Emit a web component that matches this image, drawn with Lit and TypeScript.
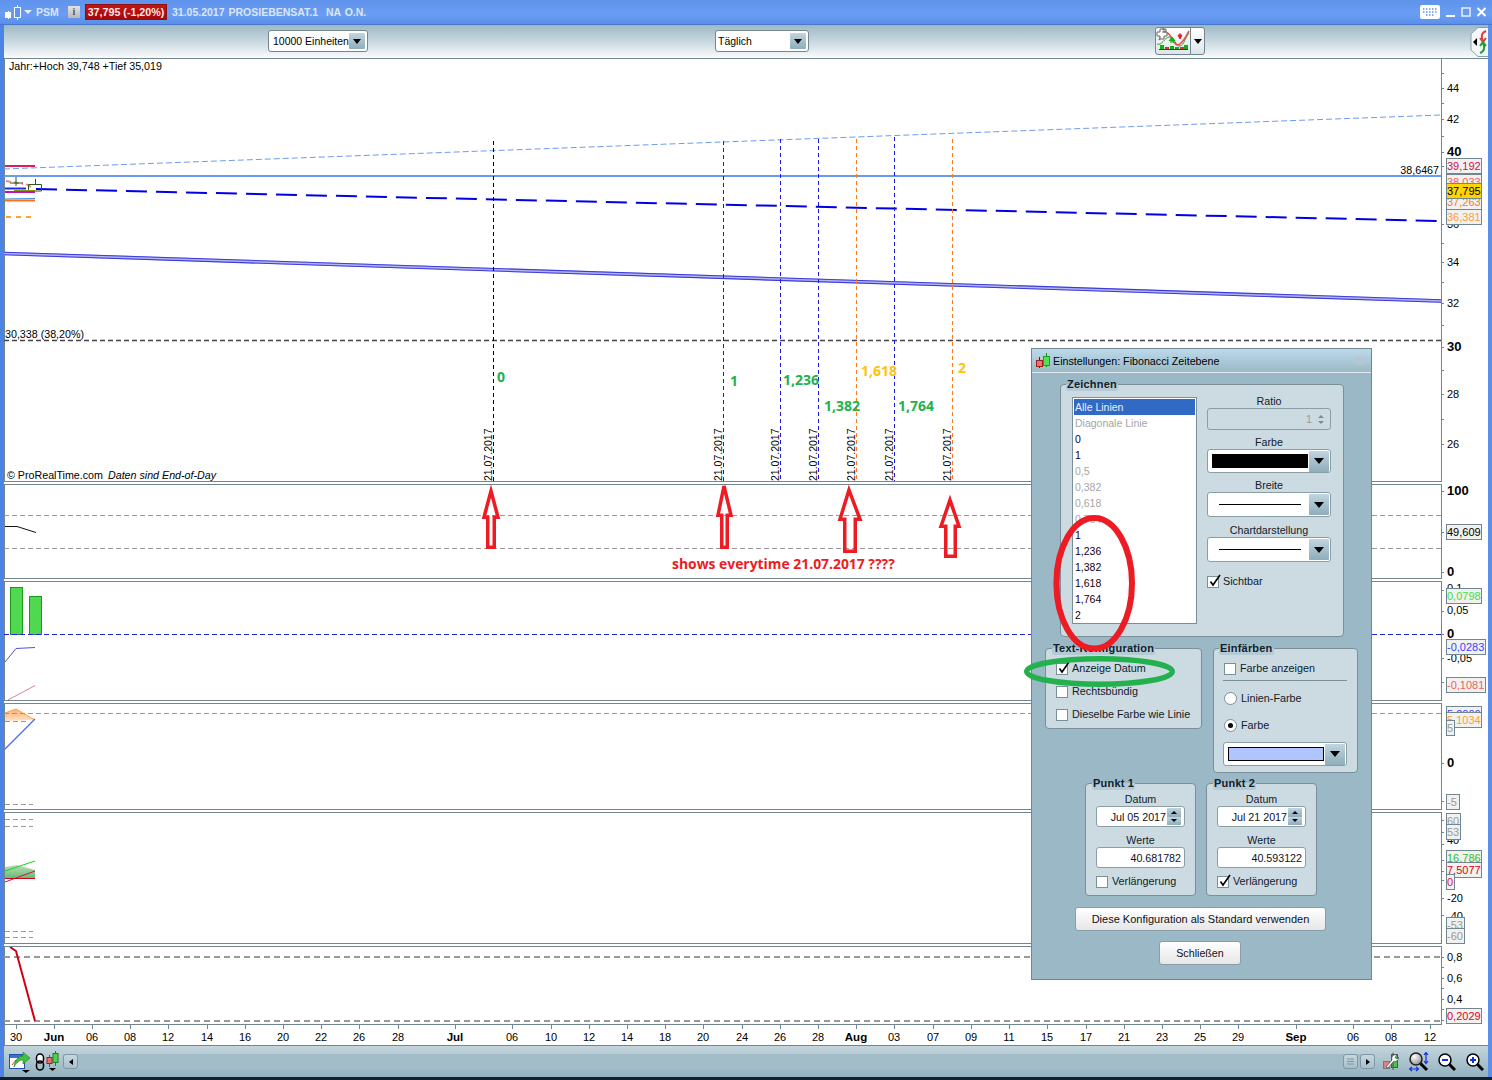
import { LitElement, html, css, svg } from "lit";
import { customElement } from "lit/decorators.js";

const LEFT = 4;
const RIGHT = 1441;
const W = RIGHT - LEFT;

type Tag = { t: string; c: string; y: number; x?: number; w?: number; bg?: string };
type Ax = { t: string; y: number; b?: boolean };

const axisTexts: Ax[] = [
  { t: "44", y: 92 }, { t: "42", y: 123 }, { t: "40", y: 156, b: true }, { t: "36", y: 228 }, { t: "34", y: 266 },
  { t: "32", y: 307 }, { t: "30", y: 351, b: true }, { t: "28", y: 398 }, { t: "26", y: 448 },
  { t: "100", y: 495, b: true }, { t: "0", y: 576, b: true },
  { t: "0,1", y: 592 }, { t: "0,05", y: 614 }, { t: "0", y: 638, b: true }, { t: "-0,05", y: 662 },
  { t: "0", y: 767, b: true },
  { t: "40", y: 844 }, { t: "-20", y: 902 }, { t: "-40", y: 920 },
  { t: "0,8", y: 961 }, { t: "0,6", y: 982 }, { t: "0,4", y: 1003 },
];

const axisTicks: number[] = [
  73, 88, 103, 119, 136, 152, 166, 224, 243, 262, 282, 303, 325, 347, 370, 394, 419, 444,
  491, 532, 572, 590, 611, 634, 658, 682, 763, 801, 820, 832, 844, 860, 871, 880, 898, 915,
  957, 967, 978, 988, 999, 1009, 1020,
];

const tags: Tag[] = [
  { t: "39,192", c: "#d0104f", y: 158, w: 36 },
  { t: "38,033", c: "#ff5a5a", y: 174, w: 36 },
  { t: "37,263", c: "#ff7a20", y: 194, w: 36 },
  { t: "37,795", c: "#000", y: 183, w: 36, bg: "#ffd400" },
  { t: "36,381", c: "#ffa030", y: 209, w: 36 },
  { t: "49,609", c: "#000", y: 524, w: 36 },
  { t: "0,0798", c: "#40e040", y: 588, w: 36 },
  { t: "-0,0283", c: "#4040ff", y: 639, w: 40 },
  { t: "-0,1081", c: "#f06060", y: 677, w: 40 },
  { t: "5,2006", c: "#4040ff", y: 706, w: 36 },
  { t: "5,1034", c: "#ffa030", y: 712, w: 36 },
  { t: "5", c: "#999", y: 720, w: 9 },
  { t: "-5", c: "#999", y: 794, w: 14 },
  { t: "60", c: "#999", y: 813, w: 15 },
  { t: "53", c: "#999", y: 824, w: 15 },
  { t: "16,786", c: "#30c030", y: 850, w: 36 },
  { t: "7,5077", c: "#e00020", y: 862, w: 36 },
  { t: "0", c: "#e0104f", y: 874, w: 9 },
  { t: "-53", c: "#999", y: 917, w: 19 },
  { t: "-60", c: "#999", y: 928, w: 19 },
  { t: "0,2029", c: "#e00020", y: 1008, w: 36 },
];

const dates: [string, number, boolean?][] = [
  ["30", 16], ["Jun", 54, true], ["06", 92], ["08", 130], ["12", 168], ["14", 207], ["16", 245], ["20", 283],
  ["22", 321], ["26", 359], ["28", 398], ["Jul", 455, true], ["06", 512], ["10", 551], ["12", 589], ["14", 627],
  ["18", 665], ["20", 703], ["24", 742], ["26", 780], ["28", 818], ["Aug", 856, true], ["03", 894], ["07", 933],
  ["09", 971], ["11", 1009], ["15", 1047], ["17", 1086], ["21", 1124], ["23", 1162], ["25", 1200], ["29", 1238],
  ["Sep", 1296, true], ["06", 1353], ["08", 1391], ["12", 1430],
];

const fibLines: [number, number, string][] = [
  [493, 141, "#000"], [723, 141, "#1a1ae0"], [780, 139, "#1a1ae0"], [818, 139, "#1a1ae0"],
  [856, 139, "#ff7a1a"], [894, 137, "#1a1ae0"], [952, 139, "#ff7a1a"],
];

const fibLabels: [string, number, number, string][] = [
  ["0", 497, 382, "#22b14c"], ["1", 730, 386, "#22b14c"], ["1,236", 783, 385, "#22b14c"],
  ["1,382", 824, 411, "#22b14c"], ["1,618", 861, 376, "#ffc20e"], ["1,764", 898, 411, "#22b14c"],
  ["2", 958, 373, "#ffc20e"],
];

// outer silhouettes: tip x, tip y, head left, head right, base y, shaft left, shaft right, bottom
const arrows: [number, number, number, number, number, number, number, number][] = [
  [491, 488, 482, 500, 519, 486, 496, 549],
  [724, 483, 716, 733, 517, 720, 729, 549],
  [849, 487, 838, 862, 521, 843, 857, 553],
  [950, 497, 939, 961, 528, 944, 957, 558],
];

const listItems: [string, boolean][] = [
  ["Diagonale Linie", true], ["0", false], ["1", false], ["0,5", true], ["0,382", true], ["0,618", true],
  ["0,764", true], ["1", false], ["1,236", false], ["1,382", false], ["1,618", false], ["1,764", false], ["2", false],
];

const check = svg`<svg class="tick" viewBox="0 0 14 14" width="14" height="14"><path d="M2.5 7.5 L5 11 L12 1" fill="none" stroke="#000" stroke-width="1.6"/></svg>`;
const caret = html`<span class="caret"></span>`;

@customElement("app-root")
export class AppRoot extends LitElement {
  static styles = css`
    :host { display: block; width: 1492px; height: 1080px; position: relative; overflow: hidden; background: #fff;
      font: 10.7px "Liberation Sans", Arial, sans-serif; color: #000; }
    * { box-sizing: border-box; }
    .win { width: 1492px; height: 1080px; display: flex; flex-direction: column; background: linear-gradient(90deg, #4c84e6, #6a9df2 40%, #5b8fea); }
    .titlebar { height: 25px; flex: none; display: flex; align-items: center; padding-left: 4px; color: #dbe6fa; font-weight: bold; font-size: 10.5px;
      background: linear-gradient(#5f93ec, #6a9df2 60%, #5a8eea); border-bottom: 1px solid #4878cc; }
    .tcaret { margin-left: 3px; }
    .psm { margin-left: 4px; width: 32px; }
    .info { width: 12px; height: 12px; background: linear-gradient(#e4e4e4, #b8b8b8); color: #556; font: bold 10px "Liberation Serif", serif; text-align: center; line-height: 12px; }
    .quote { margin-left: 5px; height: 16px; width: 82px; background: linear-gradient(#c61515, #a30808); color: #ffe8e8; border: 1px solid #8a1010; line-height: 14px; text-align: center; white-space: nowrap; font-size: 10.7px; }
    .ttl { margin-left: 5px; white-space: pre; word-spacing: 1px; }
    .winbtns { margin-left: auto; margin-right: 6px; display: flex; align-items: center; gap: 6px; }
    .content { flex: 1; margin: 0 4px; display: flex; flex-direction: column; background: #fff; min-height: 0; }
    .toolbar { height: 33px; flex: none; display: flex; align-items: flex-start; background: linear-gradient(#9db8c4, #d2dfe5 60%, #fbfcfd); }
    .sel { height: 22px; margin-top: 5px; background: #fff; border: 1px solid #71868f; border-radius: 3px; display: flex; align-items: center; padding: 0 2px 0 3px; }
    .sel .lab { flex: 1; white-space: nowrap; overflow: hidden; padding-bottom: 1px; font-size: 10.5px; }
    .dbtn { width: 16px; height: 16px; background: linear-gradient(#c0d5df, #8fadbb); display: flex; align-items: center; justify-content: center; border-radius: 1px; flex: none; }
    .caret { width: 0; height: 0; border: 4px solid transparent; border-top: 5px solid #000; border-bottom: 0; display: block; }
    .s1 { width: 100px; margin-left: 264px; padding-left: 4px; }
    .s2 { width: 94px; margin-left: 347px; padding-left: 2px; }
    .tool { width: 50px; height: 28px; margin: 2px 0 0 346px; display: flex; border: 1px solid #71868f; border-radius: 3px; background: linear-gradient(#fff, #dde5e9); }
    .tool .ic { width: 35px; border-right: 1px solid #71868f; }
    .tool .d { flex: 1; display: flex; align-items: center; justify-content: center; }
    .tab { margin: 2px 0 0 auto; width: 18px; height: 30px; }
    .rows { height: 987px; flex: none; display: flex; flex-direction: column; border-top: 1px solid #71868f; box-shadow: inset 1px 0 0 #71868f; }
    .panel { flex: none; width: ${W + 1}px; border-right: 1px solid #71868f; border-bottom: 1px solid #71868f; display: block; }
    .panel svg { display: block; width: 100%; height: 100%; }
    .gap { flex: none; height: 3px; width: ${W + 1}px; border-bottom: 1px solid #71868f; background: #fff; }
    .p1 { height: 423px; } .p2 { height: 94px; } .p3 { height: 119px; } .p4 { height: 106px; } .p5 { height: 131px; } .p6 { height: 78px; }
    .dates { flex: none; height: 20px; width: ${W + 1}px; }
    .dates svg { display: block; }
    .bottom { flex: none; height: 32px; display: flex; align-items: center;
      background: linear-gradient(#c3d5dd, #93b1bf); border-top: 1px solid #71868f; }
    .track { height: 15px; width: 1312px; margin-left: 4px; background: #a2bcc8; display: flex; justify-content: space-between; }
    .sbtn { width: 15px; height: 15px; border: 1px solid #7d97a3; border-radius: 3px; background: linear-gradient(#c6d7df, #a8c0cb); display: flex; align-items: center; justify-content: center; flex: none; }
    .sbtn i { width: 0; height: 0; border: 3.5px solid transparent; display: block; }
    .sbtn .l { border-right: 4px solid #000; border-left: 0; }
    .sbtn .r { border-left: 4px solid #000; border-right: 0; }
    .trk-r { display: flex; gap: 2px; }
    .foot { height: 3px; background: #10202c; flex: none; }
    .m5 { margin-left: 5px; } .m4 { margin-left: 4px; } .m1 { margin-left: 1px; } .m8 { margin-left: 8px; } .m10 { margin-left: 10px; }

    .axis { position: absolute; left: 0; top: 0; width: 1492px; height: 1080px; pointer-events: none; }
    .tag { position: absolute; left: 1446px; height: 16px; background: #f1f1ef; border: 1px solid #71868f; font-size: 11px; line-height: 14px; padding: 0; white-space: nowrap; overflow: hidden; }

    .dlg { position: absolute; left: 1031px; top: 348px; width: 341px; height: 632px; background: #9ab8c6; border: 1px solid #71868f; display: flex; flex-direction: column; }
    .dt { height: 24px; flex: none; display: flex; align-items: center; padding: 0 6px 0 3px; background: linear-gradient(#bcdaea, #9ab8c6); border-bottom: 1px solid #e2ecf0; gap: 2px; }
    .dt .x { margin-left: auto; }
    .group { position: relative; background: #ccdbe2; border: 1px solid #7a8f98; border-radius: 4px; flex: none; }
    .lg { position: absolute; top: -7px; left: 6px; padding: 0 1px; height: 13px; line-height: 13px; font-weight: bold; font-size: 11px; background: linear-gradient(#9ab8c6 50%, #b4cbd6 50%); border-radius: 2px; color: #10202a; white-space: nowrap; letter-spacing: .2px; }
    .zeich .lg, .einf .lg { left: 5px; }
    .zeich { margin: 11px 0 0 28px; width: 284px; height: 253px; display: flex; padding: 12px 12px 0 11px; gap: 10px; }
    .list { width: 125px; height: 227px; background: #fff; border: 1px solid #7a8f98; padding: 1px; flex: none; font-size: 10.5px; }
    .li { height: 16px; line-height: 16px; padding-left: 1px; white-space: nowrap; color: #180018; }
    .li.dis { color: #a5a5a5; }
    .li.sel2 { background: #316ac5; color: #e8eef8; }
    .side { flex: 1; display: flex; flex-direction: column; align-items: stretch; margin-top: -3px; }
    .cap { text-align: center; height: 14px; line-height: 14px; color: #10202a; }
    .spin { height: 22px; background: #ccdbe2; border: 1px solid #8a9ea7; border-radius: 3px; display: flex; align-items: center; justify-content: flex-end; color: #999; padding-right: 6px; gap: 6px; margin-bottom: 5px; }
    .arr2 { display: flex; flex-direction: column; gap: 3px; }
    .arr2 i { width: 0; height: 0; border: 3px solid transparent; display: block; }
    .arr2 .u { border-bottom: 3px solid #888; border-top: 0; }
    .arr2 .dn { border-top: 3px solid #888; border-bottom: 0; }
    .dsel { height: 25px; background: #fff; border: 1px solid #8a9ea7; border-radius: 3px; display: flex; align-items: center; padding: 0 1px 0 4px; margin-bottom: 5px; }
    .dsel.h24 { height: 24px; }
    .dsel.mb6 { margin-bottom: 6px; }
    .dbtn.big { width: 20px; height: 21px; }
    .dbtn.big .caret { border-width: 5px; border-top-width: 6px; border-bottom: 0; }
    .dsel .fill { flex: 1; }
    .sw { height: 14px; background: #000; margin-right: 1px; }
    .ln { height: 1px; background: #000; margin: 0 8px 0 7px; }
    .sw2 { height: 14px; background: #b0c4ff; border: 1px solid #000; margin-right: 1px; }
    .ck { display: flex; align-items: flex-start; gap: 4px; height: 13px; line-height: 13px; white-space: nowrap; color: #10202a; font-size: 10.8px; }
    .box { width: 12px; height: 12px; margin-top: 1px; background: #fff; border: 1px solid #7a8f98; flex: none; position: relative; }
    .box .tick { position: absolute; left: 0; top: -3px; overflow: visible; }
    .radio { width: 13px; height: 13px; border-radius: 50%; background: #fff; border: 1px solid #7a8f98; flex: none; display: flex; align-items: center; justify-content: center; }
    .radio b { width: 5px; height: 5px; border-radius: 50%; background: #000; display: block; }
    .row2 { display: flex; margin: 11px 0 0 13px; gap: 11px; align-items: flex-start; }
    .txtc { width: 157px; height: 81px; padding: 13px 0 0 10px; display: flex; flex-direction: column; gap: 10px; }
    .einf { width: 145px; height: 125px; padding: 13px 10px 0 10px; display: flex; flex-direction: column; }
    .hr { height: 1px; background: #7a8f98; margin: 5px 0 11px -1px; }
    .mt14 { margin-top: 14px; }
    .einf .dsel { height: 24px; margin: 10px 0 0 -1px; }
    .row3 { display: flex; margin: 10px 0 0 53px; gap: 10px; }
    .pt { width: 111px; height: 113px; padding: 8px 10px 0 10px; display: flex; flex-direction: column; }
    .fld { height: 21px; width: 89px; background: #fff; border: 1px solid #8a9ea7; border-radius: 3px; display: flex; align-items: center; justify-content: flex-end; padding-right: 3px; flex: none; color: #10101a; }
    .fld .sp { width: 14px; height: 17px; display: flex; flex-direction: column; margin-left: 1px; }
    .fld .sp span { flex: 1; background: linear-gradient(#c0d5df, #8fadbb); display: flex; align-items: center; justify-content: center; }
    .fld .sp i { width: 0; height: 0; border: 3px solid transparent; display: block; }
    .fld .sp .u { border-bottom: 3px solid #000; border-top: 0; }
    .fld .sp .dn { border-top: 3px solid #000; border-bottom: 0; }
    .cap2 { text-align: center; height: 14px; line-height: 14px; color: #10202a; width: 89px; }
    .cap2.w { margin-top: 6px; }
    .ptck { margin-top: 7px; }
    .sicht { margin-top: 8px; }
    .btn { height: 24px; border: 1px solid #8a9ea7; border-radius: 3px; background: linear-gradient(#fff, #e6e6e6); text-align: center; line-height: 22px; color: #10101a; flex: none; }
    .b1 { width: 251px; margin: 11px 0 0 43px; font-size: 11px; }
    .b2 { width: 82px; margin: 10px 0 0 127px; }
    .over { position: absolute; left: 0; top: 0; width: 1492px; height: 1080px; pointer-events: none; }
    text { font-family: "Liberation Sans", Arial, sans-serif; font-size: 10.7px; }
    .ot { font: bold 14px "Open Sans", sans-serif; }
    .note { font: bold 13.9px "Open Sans", sans-serif; }
    .rot { font-size: 10.5px; }
    .ax { font-size: 11px; }
    .axb { font-size: 13px; font-weight: bold; }
    .dt1 { font-size: 11px; }
    .dtb { font-size: 11.5px; font-weight: bold; }
  `;

  private panel(cls: string, y0: number, h: number, body: unknown) {
    return html`<div class="panel ${cls}"><svg viewBox="${LEFT} ${y0} ${W} ${h}" width="${W}" height="${h}" preserveAspectRatio="none">${body}</svg></div>`;
  }

  private price() {
    return svg`
      <text x="9" y="70">Jahr:+Hoch 39,748 +Tief 35,019</text>
      <line x1="4" y1="169" x2="1441" y2="115" stroke="#6d9cf0" stroke-width="1" stroke-dasharray="6 3"/>
      <line x1="4" y1="176" x2="1441" y2="176" stroke="#6b9bf0" stroke-width="2"/>
      <text x="1439" y="174" text-anchor="end">38,6467</text>
      <line x1="36" y1="189" x2="1441" y2="221" stroke="#0000e6" stroke-width="2" stroke-dasharray="21 9"/>
      <line x1="4" y1="253.5" x2="1441" y2="301" stroke="#b4b4f2" stroke-width="3.5"/>
      <line x1="4" y1="252.2" x2="1441" y2="299.7" stroke="#3c3cd8" stroke-width="1.1"/>
      <line x1="4" y1="254.8" x2="1441" y2="302.3" stroke="#3c3cd8" stroke-width="1.1"/>
      <line x1="4" y1="340.5" x2="1441" y2="340.5" stroke="#444" stroke-width="1.4" stroke-dasharray="5 3"/>
      <text x="5" y="338">30,338 (38,20%)</text>
      <line x1="5" y1="166" x2="35" y2="166" stroke="#d8205a" stroke-width="2"/>
      <line x1="6" y1="181" x2="23" y2="184" stroke="#f08090" stroke-width="2" stroke-dasharray="5 3"/>
      <line x1="26" y1="184" x2="31" y2="187" stroke="#f08090" stroke-width="2"/>
      <path d="M10 183H23M16 177V186" stroke="#2a5a1a" fill="none"/>
      <path d="M35.500 179V184.500M28.500 191V184.500H41.500V191H28.500" stroke="#2a5a1a" fill="none"/>
      <line x1="5" y1="188.500" x2="26" y2="188.500" stroke="#2030e0" stroke-width="2"/>
      <line x1="5" y1="192" x2="35" y2="192" stroke="#c010c0" stroke-width="2"/>
      <line x1="14" y1="190.500" x2="35" y2="190.500" stroke="#8a9a10" stroke-width="1"/>
      <line x1="5" y1="199" x2="35" y2="198.500" stroke="#3a8ae0" stroke-width="1"/>
      <line x1="5" y1="200.500" x2="35" y2="200.500" stroke="#ff7010" stroke-width="2"/>
      <line x1="6" y1="217" x2="33" y2="217" stroke="#ffa030" stroke-width="2" stroke-dasharray="5 5"/>
      ${fibLines.map(([x, y, c]) => svg`<line x1="${x + 0.5}" y1="${y}" x2="${x + 0.5}" y2="481" stroke="${c}" stroke-dasharray="4 3"/>`)}
      ${fibLabels.map(([t, x, y, c]) => svg`<text class="ot" x="${x}" y="${y}" fill="${c}">${t}</text>`)}
      ${fibLines.map(([x]) => svg`<text class="rot" transform="translate(${x - 1} 481) rotate(-90)">21.07.2017</text>`)}
      <text x="7" y="479">© ProRealTime.com<tspan dx="5" font-style="italic">Daten sind End-of-Day</tspan></text>`;
  }

  private osc() {
    return svg`
      <line x1="4" y1="515.500" x2="1441" y2="515.500" stroke="#999" stroke-dasharray="5 3"/>
      <line x1="4" y1="548.500" x2="1441" y2="548.500" stroke="#999" stroke-dasharray="5 3"/>
      <path d="M5 526.500H17L36 532.500" stroke="#111" fill="none"/>`;
  }

  private macd() {
    return svg`
      <rect x="10.500" y="587.500" width="12" height="47" fill="#50d850" stroke="#1a9a1a"/>
      <rect x="29.500" y="596.500" width="12" height="38" fill="#50d850" stroke="#1a9a1a"/>
      <line x1="4" y1="634.500" x2="1441" y2="634.500" stroke="#2020e0" stroke-dasharray="5 3"/>
      <path d="M5 662L16 648.500L35 647.500" stroke="#5050e0" fill="none"/>
      <line x1="8" y1="700" x2="35" y2="685.500" stroke="#e08090"/>`;
  }

  private p4() {
    return svg`
      <defs><linearGradient id="og" x1="0" y1="0" x2="0" y2="1"><stop offset="0" stop-color="#ffb070"/><stop offset="1" stop-color="#ffe0c8"/></linearGradient></defs>
      <polygon points="5,713 16,709 35,720 5,721" fill="url(#og)"/>
      <path d="M5 713L16 709L35 720" stroke="#ffa040" fill="none"/>
      <line x1="4" y1="713.500" x2="1441" y2="713.500" stroke="#999" stroke-dasharray="5 3"/>
      <line x1="5" y1="721.500" x2="28" y2="721.500" stroke="#999" stroke-dasharray="5 3"/>
      <line x1="5" y1="749" x2="35" y2="719" stroke="#4a6cf5" stroke-width="1.2"/>
      <line x1="5" y1="804.500" x2="33" y2="804.500" stroke="#999" stroke-dasharray="5 3"/>`;
  }

  private p5() {
    return svg`
      <defs><linearGradient id="gg" x1="0" y1="0" x2="0" y2="1"><stop offset="0" stop-color="#c0d8c0"/><stop offset="1" stop-color="#60c070"/></linearGradient></defs>
      <polygon points="5,867 17,865 35,870 35,878 5,878" fill="url(#gg)"/>
      <line x1="5" y1="871" x2="35" y2="861" stroke="#20d020"/>
      <line x1="5" y1="882" x2="35" y2="871" stroke="#e01030"/>
      <line x1="5" y1="878.500" x2="35" y2="878.500" stroke="#d00020"/>
      ${[819.5, 826.5, 931.5, 937.5].map((y) => svg`<line x1="5" y1="${y}" x2="33" y2="${y}" stroke="#999" stroke-dasharray="5 3"/>`)}`;
  }

  private p6() {
    return svg`
      <line x1="4" y1="957" x2="1441" y2="957" stroke="#999" stroke-width="2" stroke-dasharray="6 4"/>
      <line x1="4" y1="1021" x2="1441" y2="1021" stroke="#999" stroke-width="2" stroke-dasharray="6 4"/>
      <path d="M10 947L16 951L35 1021" stroke="#d00010" stroke-width="2" fill="none"/>`;
  }

  private datesRow() {
    return html`<div class="dates"><svg viewBox="${LEFT} 1025 ${W + 1} 20" width="${W + 1}" height="20">
      ${dates.map(([t, x, b]) => svg`
        <line x1="${x + 0.5}" y1="1025" x2="${x + 0.5}" y2="1029" stroke="#71868f"/>
        <text class="${b ? "dtb" : "dt1"}" x="${x}" y="1041" text-anchor="middle">${t}</text>`)}
    </svg></div>`;
  }

  private axis() {
    return html`<svg class="axis" viewBox="0 0 1492 1080">
      ${axisTicks.map((y) => svg`<line x1="1441" y1="${y + 0.5}" x2="1444" y2="${y + 0.5}" stroke="#71868f"/>`)}
      ${axisTexts.map((a) => svg`<text class="${a.b ? "axb" : "ax"}" x="1447" y="${a.y}">${a.t}</text>`)}
    </svg>
    ${tags.map((g) => html`<div class="tag" style="top:${g.y}px;width:${g.w ?? 36}px;color:${g.c};${g.bg ? `background:${g.bg}` : ""}">${g.t}</div>`)}`;
  }

  private overlay() {
    const s = 1.75;
    return html`<svg class="over" viewBox="0 0 1492 1080">
      ${arrows.map(([tx, ty, hl, hr, by, sl, sr, bot]) => svg`<polygon points="${tx},${ty + 3} ${hr - 2},${by - s} ${sr - s},${by - s} ${sr - s},${bot - s} ${sl + s},${bot - s} ${sl + s},${by - s} ${hl + 2},${by - s}" fill="none" stroke="#ed1c24" stroke-width="3.5"/>`)}
      <text class="note" x="672" y="569" fill="#ed1c24">shows everytime 21.07.2017 ????</text>
      <ellipse cx="1094.200" cy="583.300" rx="37.800" ry="65.300" fill="none" stroke="#ed1c24" stroke-width="6"/>
      <ellipse cx="1099.500" cy="671.500" rx="72.800" ry="12.800" fill="none" stroke="#22b14c" stroke-width="5.500"/>
    </svg>`;
  }

  private checkRow(label: string, on = false) {
    return html`<div class="ck"><span class="box">${on ? check : ""}</span>${label}</div>`;
  }

  private drop(inner: unknown, cls = "") {
    return html`<div class="dsel ${cls}">${inner}<span class="dbtn big">${caret}</span></div>`;
  }

  private punkt(name: string, d: string, v: string, on: boolean) {
    return html`<div class="group pt"><div class="lg">${name}</div>
      <div class="cap2">Datum</div>
      <div class="fld">${d}<span class="sp"><span><i class="u"></i></span><span><i class="dn"></i></span></span></div>
      <div class="cap2 w">Werte</div>
      <div class="fld">${v}</div>
      <div class="ptck">${this.checkRow("Verlängerung", on)}</div>
    </div>`;
  }

  private dialog() {
    return html`<div class="dlg">
      <div class="dt">
        <svg width="16" height="16" viewBox="0 0 16 16"><path d="M4.500 4V15" stroke="#900"/><rect x="1.500" y="7.500" width="6" height="6" fill="#f07070" stroke="#a02020"/><path d="M11.500 0V14" stroke="#090"/><rect x="8.500" y="3.500" width="6" height="9" fill="#50e050" stroke="#20a020"/></svg>
        <span>Einstellungen: Fibonacci Zeitebene</span>
        <svg class="x" width="10" height="10" viewBox="0 0 10 10"><path d="M1 1L9 9M9 1L1 9" stroke="#b9c5cb" stroke-width="2.600"/></svg>
      </div>
      <div class="group zeich"><div class="lg">Zeichnen</div>
        <div class="list">
          <div class="li sel2">Alle Linien</div>
          ${listItems.map(([t, d]) => html`<div class="li ${d ? "dis" : ""}">${t}</div>`)}
        </div>
        <div class="side">
          <div class="cap">Ratio</div>
          <div class="spin">1<span class="arr2"><i class="u"></i><i class="dn"></i></span></div>
          <div class="cap">Farbe</div>
          ${this.drop(html`<span class="fill sw"></span>`, "h24")}
          <div class="cap">Breite</div>
          ${this.drop(html`<span class="fill ln"></span>`, "mb6")}
          <div class="cap">Chartdarstellung</div>
          ${this.drop(html`<span class="fill ln"></span>`)}
          <div class="sicht">${this.checkRow("Sichtbar", true)}</div>
        </div>
      </div>
      <div class="row2">
        <div class="group txtc"><div class="lg">Text-Konfiguration</div>
          ${this.checkRow("Anzeige Datum", true)}
          ${this.checkRow("Rechtsbündig")}
          ${this.checkRow("Dieselbe Farbe wie Linie")}
        </div>
        <div class="group einf"><div class="lg">Einfärben</div>
          ${this.checkRow("Farbe anzeigen")}
          <div class="hr"></div>
          <div class="ck"><span class="radio"></span>Linien-Farbe</div>
          <div class="ck mt14"><span class="radio"><b></b></span>Farbe</div>
          ${this.drop(html`<span class="fill sw2"></span>`)}
        </div>
      </div>
      <div class="row3">
        ${this.punkt("Punkt 1", "Jul 05 2017", "40.681782", false)}
        ${this.punkt("Punkt 2", "Jul 21 2017", "40.593122", true)}
      </div>
      <div class="btn b1">Diese Konfiguration als Standard verwenden</div>
      <div class="btn b2">Schließen</div>
    </div>`;
  }

  render() {
    return html`<div class="win">
      <div class="titlebar">
        <svg width="17" height="17" viewBox="0 0 17 17"><path d="M4.500 7V15M13.500 1V16" stroke="#fff"/><rect x="1" y="8" width="6" height="6" fill="#fff"/><rect x="10.500" y="3.500" width="6" height="10" fill="#5f93ec" stroke="#fff"/></svg>
        <svg class="tcaret" width="8" height="6" viewBox="0 0 8 6"><path d="M0 1H8L4 5Z" fill="#e4ecfa"/></svg>
        <span class="psm">PSM</span>
        <span class="info">i</span>
        <span class="quote">37,795 (-1,20%)</span>
        <span class="ttl">31.05.2017 PROSIEBENSAT.1  NA O.N.</span>
        <span class="winbtns">
          <svg width="20" height="14" viewBox="0 0 20 14"><rect width="20" height="14" rx="2" fill="#fff"/><path d="M3 4H17M3 7H17M6 10H14" stroke="#5f93ec" stroke-dasharray="1.500 1.500" stroke-width="1.500"/></svg>
          <svg width="9" height="10" viewBox="0 0 9 10"><path d="M0 9H9" stroke="#fff" stroke-width="2"/></svg>
          <svg width="10" height="10" viewBox="0 0 10 10"><rect x="1" y="1" width="8" height="8" fill="none" stroke="#e8f0fc" stroke-width="1.500"/></svg>
          <svg width="9" height="10" viewBox="0 0 9 10"><path d="M.5 1L8.500 9M8.500 1L.5 9" stroke="#fff" stroke-width="2"/></svg>
        </span>
      </div>
      <div class="content">
        <div class="toolbar">
          <div class="sel s1"><span class="lab">10000 Einheiten</span><span class="dbtn">${caret}</span></div>
          <div class="sel s2"><span class="lab">Täglich</span><span class="dbtn">${caret}</span></div>
          <div class="tool">
            <span class="ic"><svg width="34" height="26" viewBox="0 0 34 26">
              <rect x="3" y="21" width="29" height="1" fill="#2030c0"/>
              ${[[4, 17, 4, "#10b010"], [9, 19, 2, "#d03040"], [14, 18, 3, "#10b010"], [19, 19, 2, "#10b010"], [24, 19, 2, "#d03040"], [28, 17, 4, "#10b010"]].map(([x, y, h, c]) => svg`<rect x="${x}" y="${y}" width="4" height="${h}" fill="${c}"/>`)}
              <path d="M1 16C6 18 8 10 13 9S20 19 24 18S29 10 33 5" fill="none" stroke="#30a030"/>
              <path d="M3 12C8 2 12 4 15 9S20 20 25 15S30 8 33 3" fill="none" stroke="#e05050" stroke-width="1.500"/>
              <path d="M6 4H10V1H6M6 1H4V4H1V8H4V11H8V8H11V4H8V1H6" fill="#fff" stroke="#666"/>
              <path d="M14 14H18M16 9V14M13 13L16 9L19 13" fill="#10b010" stroke="#10b010"/>
              <path d="M24 5V9M22 7L24 11L26 7Z" fill="#e02020" stroke="#e02020"/>
            </svg></span>
            <span class="d">${caret}</span>
          </div>
          <span class="tab"><svg width="18" height="30" viewBox="0 0 18 30">
            <path d="M18 .5H8L1 7V23L8 29.500H18" fill="#f5f8f9" stroke="#8aa0aa"/>
            <path d="M7 11L3 15L7 19Z" fill="#000"/>
            <path d="M16 4C11 6 11 10 13 14M10 11L13 15L16 11" fill="none" stroke="#e04040" stroke-width="2"/>
            <path d="M10 26C15 24 15 20 13 16M10 19L13 15L16 19" fill="none" stroke="#20a030" stroke-width="2"/>
          </svg></span>
        </div>
        <div class="rows">
          ${this.panel("p1", 59, 422, this.price())}
          <div class="gap"></div>
          ${this.panel("p2", 485, 93, this.osc())}
          <div class="gap"></div>
          ${this.panel("p3", 582, 118, this.macd())}
          <div class="gap"></div>
          ${this.panel("p4", 704, 105, this.p4())}
          <div class="gap"></div>
          ${this.panel("p5", 813, 130, this.p5())}
          <div class="gap"></div>
          ${this.panel("p6", 947, 77, this.p6())}
          ${this.datesRow()}
        </div>
        <div class="bottom">
          <svg class="m5" width="22" height="24" viewBox="0 0 22 24"><rect x=".5" y="4.500" width="15" height="14" fill="#fff" stroke="#2050b0"/><rect x="1" y="5" width="14" height="3" fill="#3a70d0"/><path d="M3 15L7 10L9 13" fill="none" stroke="#e04040"/><path d="M5 17C6 9 10 6 14 6V2L21 8L14 14V10C10 10 8 12 5 17Z" fill="#40c040" stroke="#208020" stroke-width=".6"/><path d="M13 20H21L17 23Z" fill="#000"/></svg>
          <svg class="m4" width="10" height="18" viewBox="0 0 10 18"><rect x="1.500" y="1" width="7" height="9" rx="3.500" fill="#fff" stroke="#000" stroke-width="1.500"/><rect x="1.500" y="8" width="7" height="9" rx="3.500" fill="none" stroke="#000" stroke-width="1.500"/></svg>
          <svg class="m1" width="13" height="22" viewBox="0 0 13 22"><path d="M3.500 4V16M9.500 0V15" stroke="#208020"/><rect x="1" y="6.500" width="5" height="6" fill="#f07070" stroke="#a02020"/><rect x="7" y="2.500" width="5" height="9" fill="#50d050" stroke="#208020"/><path d="M3 17H10L6.500 20Z" fill="#000"/></svg>
          <div class="track">
            <span class="sbtn"><i class="l"></i></span>
            <span class="trk-r">
              <span class="sbtn"><svg width="9" height="7" viewBox="0 0 9 7"><path d="M1 1H8M1 3.500H8M1 6H8" stroke="#7d97a3"/></svg></span>
              <span class="sbtn"><i class="r"></i></span>
            </span>
          </div>
          <svg class="m8" width="16" height="19" viewBox="0 0 16 19"><rect x=".5" y="9.500" width="6" height="7" fill="#e08080" stroke="#777"/><rect x="8.500" y="2.500" width="6" height="13" fill="#50c050" stroke="#555"/><path d="M10 .5V18" stroke="#555"/><path d="M3 15L9 8C8 4 11 2 14 3L12 5.500L14 7L16 5C16 8 13 10 10.500 9.500L5 16Z" fill="#fff" stroke="#333" stroke-width=".6"/></svg>
          <svg class="m10" width="21" height="20" viewBox="0 0 21 20"><defs><radialGradient id="mg" cx=".35" cy=".3" r=".8"><stop offset="0" stop-color="#fff"/><stop offset="1" stop-color="#888"/></radialGradient></defs><circle cx="7" cy="7" r="6" fill="url(#mg)" stroke="#222" stroke-width="1.500"/><path d="M11.500 11.500L18 18" stroke="#000" stroke-width="3"/><path d="M17 1V11M15 3L17 .5L19 3M15 9L17 11.500L19 9M1 17H9M3 15L.5 17L3 19M7 15L9.500 17L7 19" fill="none" stroke="#1030e0" stroke-width="1.200"/></svg>
          <svg class="m8" width="18" height="18" viewBox="0 0 18 18"><circle cx="7" cy="7" r="6" fill="#fff" stroke="#000" stroke-width="1.500"/><path d="M4 7H10" stroke="#1030e0" stroke-width="2"/><path d="M11.500 11.500L17 17" stroke="#000" stroke-width="3"/></svg>
          <svg class="m10" width="18" height="18" viewBox="0 0 18 18"><circle cx="7" cy="7" r="6" fill="#fff" stroke="#000" stroke-width="1.500"/><path d="M4 7H10M7 4V10" stroke="#1030e0" stroke-width="2"/><path d="M11.500 11.500L17 17" stroke="#000" stroke-width="3"/></svg>
        </div>
      </div>
      <div class="foot"></div>
    </div>
    ${this.axis()}
    ${this.dialog()}
    ${this.overlay()}`;
  }
}
